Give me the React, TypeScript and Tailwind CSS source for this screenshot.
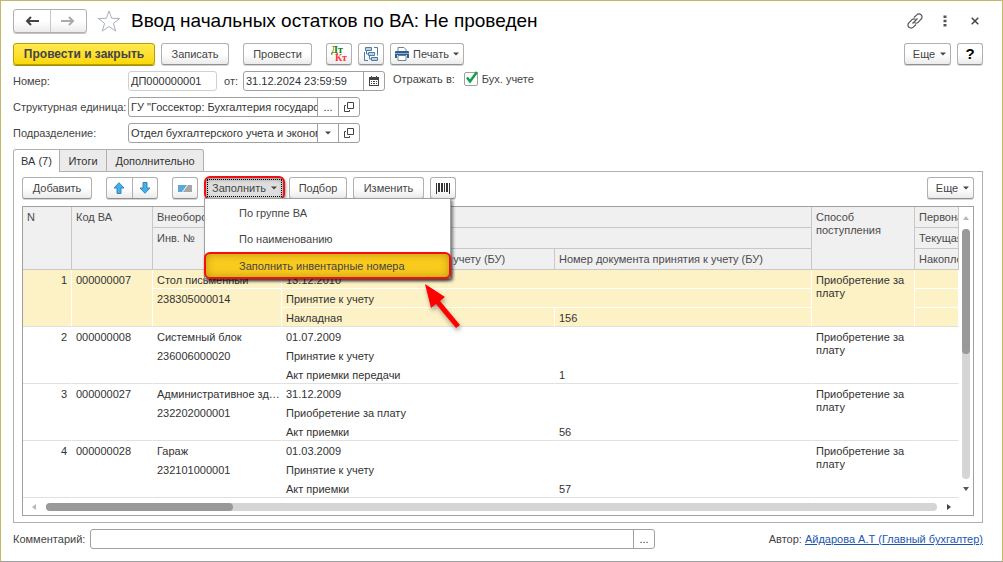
import { useState, type ReactNode } from "react";
import clsx from "clsx";

interface ButtonProps {
  label?: string;
  children?: ReactNode;
  className?: string;
}

interface AssetRow {
  n: number;
  code: string;
  name: string;
  inv: string;
  date: string;
  operation: string;
  doc: string;
  docNumber: string;
}

const rows: AssetRow[] = [
  { n: 1, code: "000000007", name: "Стол письменный", inv: "238305000014", date: "13.12.2010", operation: "Принятие к учету", doc: "Накладная", docNumber: "156" },
  { n: 2, code: "000000008", name: "Системный блок", inv: "236006000020", date: "01.07.2009", operation: "Принятие к учету", doc: "Акт приемки передачи", docNumber: "1" },
  { n: 3, code: "000000027", name: "Административное здание", inv: "232202000001", date: "31.12.2009", operation: "Приобретение за плату", doc: "Акт приемки", docNumber: "56" },
  { n: 4, code: "000000028", name: "Гараж", inv: "232101000001", date: "01.03.2009", operation: "Принятие к учету", doc: "Акт приемки", docNumber: "57" },
];

const tabs = [
  { label: "ВА (7)", width: "w-[47px]" },
  { label: "Итоги", width: "w-[47px]" },
  { label: "Дополнительно", width: "w-[97px]" },
];

const fillMenu = ["По группе ВА", "По наименованию", "Заполнить инвентарные номера"];

function Button({ label, children, className }: ButtonProps) {
  return (
    <button
      aria-label={label}
      className={clsx(
        "h-[22px] shrink-0 flex items-center justify-center rounded-[3px] border border-[#b0b0b0] border-b-[#909090] bg-linear-to-b from-white from-50% to-[#ebebeb] shadow-[0_1px_0_#d4d4d4] whitespace-nowrap text-[#444]",
        className
      )}
    >
      {children}
    </button>
  );
}

function Caret() {
  return (
    <svg width="6" height="4" viewBox="0 0 6 4" className="shrink-0">
      <path d="M0 0.5h6L3 3.5z" fill="#444" />
    </svg>
  );
}

function OpenIcon() {
  return (
    <svg width="10" height="10" viewBox="0 0 10 10" fill="none" stroke="#444">
      <path d="M3.5 0.5h6v6h-6zM2 3.5H0.5v6h5V8" />
    </svg>
  );
}

// text box with its side buttons
function Field({ id, value, label, width, children }: { id: string; value: string; label: string; width: string; children?: ReactNode }) {
  return (
    <div className={clsx("flex h-5 shrink-0 rounded-[3px] border border-[#a0a0a0] bg-white", width)}>
      <input id={id} aria-label={label} defaultValue={value} className="min-w-0 flex-1 pl-[2px] text-[#333] outline-none" />
      {children}
    </div>
  );
}

function SideButton({ label, children }: { label: string; children: ReactNode }) {
  return (
    <button aria-label={label} className="w-[21px] shrink-0 flex items-center justify-center border-l border-[#a0a0a0] text-[#333]">
      {children}
    </button>
  );
}

function TitleBar() {
  return (
    <div className="flex h-6 items-center">
      <div className="flex h-6 w-[74px] shrink-0 rounded-[3px] border border-[#b0b0b0] bg-linear-to-b from-white from-50% to-[#ebebeb] shadow-[0_1px_0_#c4c4c4]">
        <button aria-label="Назад" className="flex flex-1 items-center justify-center border-r border-[#c8c8c8]">
          <svg width="14" height="10" viewBox="0 0 14 10" fill="none" stroke="#444" strokeWidth="2">
            <path d="M14 5H2M6 1L2 5l4 4" />
          </svg>
        </button>
        <button aria-label="Вперед" className="flex flex-1 items-center justify-center">
          <svg width="14" height="10" viewBox="0 0 14 10" fill="none" stroke="#aaa" strokeWidth="2">
            <path d="M0 5h12M8 1l4 4-4 4" />
          </svg>
        </button>
      </div>
      <button aria-label="В избранное" className="ml-[10px]">
        <svg width="24" height="22" viewBox="0 0 24 22" fill="none" stroke="#a9b0b8">
          <path d="M12 1l2.7 7.3 8 .2-6.3 4.9 2.3 7.6-6.7-4.5L5.3 21l2.3-7.6L1.3 8.5l8-.2z" />
        </svg>
      </button>
      <h1 className="ml-[10px] flex-1 truncate text-[19px] leading-6 text-black">Ввод начальных остатков по ВА: Не проведен</h1>
      <div className="flex items-center text-[#444]">
        <button aria-label="Ссылка">
          <svg width="16" height="16" viewBox="0 0 16 16" fill="none" stroke="#555" strokeWidth="1.2">
            <path d="M7 4.5l2.7-2.7a3 3 0 0 1 4.4 0 3 3 0 0 1 0 4.4L11 9.3a3 3 0 0 1-3.5.5M9 11.5l-2.7 2.7a3 3 0 0 1-4.4 0 3 3 0 0 1 0-4.4L5 6.7a3 3 0 0 1 3.5-.5M5.5 10.5l5-5" />
          </svg>
        </button>
        <button aria-label="Меню" className="ml-5">
          <svg width="4" height="12" viewBox="0 0 4 12" fill="#555">
            <path d="M0.5 0.5h3v2.5h-3zM0.5 4.7h3v2.5h-3zM0.5 9h3v2.5h-3z" />
          </svg>
        </button>
        <button aria-label="Закрыть" className="mr-1 ml-6">
          <svg width="8" height="8" viewBox="0 0 8 8" stroke="#444" strokeWidth="1.5">
            <path d="M0.7 0.7l6.6 6.6M7.3 0.7L0.7 7.3" />
          </svg>
        </button>
      </div>
    </div>
  );
}

function CommandBar() {
  return (
    <div className="mt-[10px] flex gap-[6px]">
      <button className="h-[22px] w-[142px] shrink-0 rounded-[3px] border border-[#b8a000] bg-linear-to-b from-[#ffe94a] to-[#fbd800] text-[12px] font-bold text-[#444] shadow-[0_1px_0_#a89000]">
        Провести и закрыть
      </button>
      <Button className="w-[68px]">Записать</Button>
      <Button className="ml-2 w-[69px]">Провести</Button>
      <Button className="ml-2 w-[26px]" label="Движения документа">
        <svg width="20" height="18" viewBox="0 0 20 18" fontFamily="Liberation Serif" fontWeight="bold" fontSize="10">
          <text x="2" y="8" fill="#1a7a00">Дт</text>
          <text x="6" y="16" fill="#f33">Кт</text>
        </svg>
      </Button>
      <Button className="w-[26px]" label="Структура подчиненности">
        <svg width="14" height="14" viewBox="0 0 14 14" fill="none" stroke="#4f7ca3">
          <path d="M1.5 0.5h6v3h-6zM4.5 5.5h6v3h-6zM7.5 10.5h6v3h-6z" fill="#b9d1e6" />
          <path d="M10 0.5h3.5v8M0.5 5v8.5H4M2.5 4v3h2M5.500 9v3h2" />
        </svg>
      </Button>
      <Button className="w-[74px] gap-1">
        <svg width="14" height="14" viewBox="0 0 14 14">
          <path d="M3 4V0.5h6L11 2.5V4" fill="#fff" stroke="#6b8298" />
          <path d="M1 4h12q1 0 1 1v6h-2V8H2v3H0V5q0-1 1-1z" fill="#2c5f8d" />
          <path d="M0 6.5h14" stroke="#8fb2d0" />
          <path d="M3 8.5h8v5H3z" fill="#fff" stroke="#6b8298" />
        </svg>
        <span>Печать</span>
        <Caret />
      </Button>
      <div className="ml-auto flex gap-[6px]">
        <Button className="w-[47px] gap-[5px] pl-1">Еще <Caret /></Button>
        <Button className="w-[26px] text-[15px] font-bold text-black">?</Button>
      </div>
    </div>
  );
}

function DocumentFields() {
  return (
    <div className="mt-[6px] flex flex-col gap-[6px] text-[#444]">
      <div className="flex h-5 items-center">
        <label htmlFor="number" className="w-[115px] shrink-0">Номер:</label>
        <div className="flex h-5 w-[89px] shrink-0 rounded-[3px] border border-[#d0d0d0]">
          <input id="number" defaultValue="ДП000000001" className="w-full pl-[2px] text-[#333] outline-none" />
        </div>
        <label htmlFor="date" className="w-[26px] shrink-0 pl-[7px]">от:</label>
        <Field id="date" label="Дата" value="31.12.2024 23:59:59" width="w-[142px]">
          <SideButton label="Календарь">
            <svg width="10" height="10" viewBox="0 0 10 10" fill="#444">
              <path d="M0 1h10v9H0zM1 4v5h8V4z" fillRule="evenodd" />
              <path d="M2 0h1v2H2zM7 0h1v2H7zM2 5h1v1H2zM4 5h2v1H4zM7 5h1v1H7zM2 7h1v1H2zM4 7h2v1H4zM7 7h1v1H7z" />
            </svg>
          </SideButton>
        </Field>
        <div className="mb-1 ml-2 flex items-center whitespace-nowrap">
          <span>Отражать в:</span>
          <label className="ml-[9px] flex items-center gap-1">
            <span className="relative flex size-[14px]">
              <input type="checkbox" defaultChecked className="peer size-[14px] appearance-none rounded-[2px] border border-[#a0a0a0] bg-white" />
              <svg className="pointer-events-none absolute inset-0 hidden overflow-visible peer-checked:block" width="14" height="14" viewBox="0 0 14 14" fill="none" stroke="#0ea04b" strokeWidth="2.5">
                <path d="M3 5.5L6 9.5L13 0" />
              </svg>
            </span>
            <span>Бух. учете</span>
          </label>
        </div>
      </div>
      <div className="flex h-5 items-center">
        <label htmlFor="unit" className="w-[115px] shrink-0 whitespace-nowrap">Структурная единица:</label>
        <Field id="unit" label="Структурная единица" value={'ГУ "Госсектор: Бухгалтерия государственного учреждения"'} width="w-[232px]">
          <SideButton label="Выбрать">...</SideButton>
          <SideButton label="Открыть"><OpenIcon /></SideButton>
        </Field>
      </div>
      <div className="flex h-5 items-center">
        <label htmlFor="department" className="w-[115px] shrink-0">Подразделение:</label>
        <Field id="department" label="Подразделение" value="Отдел бухгалтерского учета и экономики" width="w-[232px]">
          <SideButton label="Список"><Caret /></SideButton>
          <SideButton label="Открыть"><OpenIcon /></SideButton>
        </Field>
      </div>
    </div>
  );
}

function FillMenu() {
  return (
    <div className="absolute top-[21px] left-0 z-10 w-[247px] border border-[#a0a0a0] bg-white pt-px shadow-[2px_2px_3px_rgba(0,0,0,0.5)]">
      {fillMenu.map((item, index) => (
        <button
          key={item}
          className={clsx(
            "block h-[26px] text-left text-[#444]",
            index === 2
              ? "-mx-px -mb-px h-[27px] w-[247px] rounded-md border-2 border-[#f00f14] bg-[#f9cb1e] pl-[33px] shadow-[inset_0_0_8px_rgba(150,110,0,0.6),1px_2px_3px_rgba(0,0,0,0.5)]"
              : "w-full pl-[34px]"
          )}
        >
          {item}
        </button>
      ))}
      <svg className="pointer-events-none absolute top-[83px] left-[217px] drop-shadow-[1px_3px_2px_rgba(0,0,0,0.35)]" width="42" height="48" viewBox="0 0 42 48">
        <path d="M3 2l20 13-5 4 20 24-4 3-20-24-5 4z" fill="#f00" />
      </svg>
    </div>
  );
}

function TableBar() {
  return (
    <div className="flex gap-[6px]">
      <Button className="w-[70px]">Добавить</Button>
      <div className="ml-2 flex h-[22px] w-[52px] shrink-0 rounded-[3px] border border-[#b0b0b0] border-b-[#909090] bg-linear-to-b from-white from-50% to-[#ebebeb] shadow-[0_1px_0_#d4d4d4]">
        <button aria-label="Вверх" className="flex flex-1 items-center justify-center border-r border-[#b0b0b0]">
          <svg width="12" height="12" viewBox="0 0 12 12" fill="#41b0f0" stroke="#3a86b4">
            <path d="M6 0.7L11 6H8v5.5H4V6H1z" />
          </svg>
        </button>
        <button aria-label="Вниз" className="flex flex-1 items-center justify-center">
          <svg width="12" height="12" viewBox="0 0 12 12" fill="#41b0f0" stroke="#3a86b4">
            <path d="M6 11.3L11 6H8V0.5H4V6H1z" />
          </svg>
        </button>
      </div>
      <Button className="ml-2 w-[26px]" label="Выделить">
        <svg width="14" height="7" viewBox="0 0 14 7">
          <path d="M0 0h9L4 7H0z" fill="#5aa9dc" />
          <path d="M10 0h4v7H5z" fill="#a6a6a6" />
        </svg>
      </Button>
      <div className="relative w-[79px] shrink-0">
        <button className="-mt-px flex h-6 w-[81px] items-center rounded-md border-2 border-[#f00f14] bg-[#dedede] p-px text-[#444] shadow-[inset_0_1px_4px_rgba(0,0,0,0.4),1px_2px_3px_rgba(0,0,0,0.4)]">
          <span className="flex h-[18px] w-full items-center justify-center gap-[5px] border border-dotted border-black">Заполнить <Caret /></span>
        </button>
        <FillMenu />
      </div>
      <Button className="w-[58px]">Подбор</Button>
      <Button className="w-[71px]">Изменить</Button>
      <Button className="w-[26px]" label="Штрихкод">
        <svg width="14" height="11" viewBox="0 0 14 11" fill="#333">
          <path d="M0 0h1v11H0zM2 0h2v9H2zM5 0h2v9H5zM8 0h1v9H8zM10 0h2v9h-2zM13 0h1v11h-1z" />
        </svg>
      </Button>
      <Button className="ml-auto w-[47px] gap-[5px] pl-1">Еще <Caret /></Button>
    </div>
  );
}

const th = "border-r border-b border-[#c8c8c8] bg-[#f0f0f0] pt-1 pb-[3px] pl-1 text-left align-top font-normal text-[#4a4a4a] overflow-hidden whitespace-nowrap";
const td = "pt-1 pb-px pl-1 align-top overflow-hidden text-ellipsis whitespace-nowrap";

function AssetsTable() {
  return (
    <table className="w-full table-fixed border-separate border-spacing-0 leading-[13px]">
      <colgroup>
        <col className="w-[49px]" />
        <col className="w-[81px]" />
        <col className="w-[129px]" />
        <col className="w-[273px]" />
        <col />
        <col className="w-[103px]" />
        <col className="w-11" />
      </colgroup>
      <thead>
        <tr className="h-[21px]">
          <th rowSpan={3} className={th}>N</th>
          <th rowSpan={3} className={th}>Код ВА</th>
          <th className={th}>Внеоборотный</th>
          <th colSpan={2} className={th}></th>
          <th rowSpan={3} className={th}>Способ<br />поступления</th>
          <th className={th}>Первоначальная</th>
        </tr>
        <tr className="h-[21px]">
          <th rowSpan={2} className={th}>Инв. №</th>
          <th colSpan={2} className={th}></th>
          <th className={th}>Текущая</th>
        </tr>
        <tr className="h-[21px]">
          <th className={th}>Название документа принятия к учету (БУ)</th>
          <th className={th}>Номер документа принятия к учету (БУ)</th>
          <th className={th}>Накопленная</th>
        </tr>
      </thead>
      {rows.map((row, index) => {
        const selected = index === 0;
        const cell = clsx(td, selected ? "border-r border-b border-white bg-[#fdf1c6]" : "border-r border-b border-transparent");
        const last = clsx(td, selected ? "border-r border-r-white bg-[#fdf1c6]" : "border-r border-r-transparent", "border-b border-b-[#e0e0e0]");
        return (
          <tbody key={row.code} className="text-[#333]">
            <tr className="h-[19px]">
              <td rowSpan={3} className={clsx(last, "pr-1 text-right")}>{row.n}</td>
              <td rowSpan={3} className={last}>{row.code}</td>
              <td className={cell}>{row.name}</td>
              <td colSpan={2} className={cell}>{row.date}</td>
              <td rowSpan={3} className={last}>Приобретение за<br />плату</td>
              <td className={cell}></td>
            </tr>
            <tr className="h-[19px]">
              <td rowSpan={2} className={last}>{row.inv}</td>
              <td colSpan={2} className={cell}>{row.operation}</td>
              <td className={cell}></td>
            </tr>
            <tr className="h-[19px]">
              <td className={last}>{row.doc}</td>
              <td className={last}>{row.docNumber}</td>
              <td className={last}></td>
            </tr>
          </tbody>
        );
      })}
    </table>
  );
}

export default function App() {
  const [activeTab, setActiveTab] = useState(tabs[0].label);

  return (
    <main className="border border-[#c5b668] border-b-[#a0a0a0] bg-white pt-2 pr-[19px] pb-3 pl-3 font-['Liberation_Sans',Arial,sans-serif] text-[11px] leading-[14px]">
      <TitleBar />
      <CommandBar />
      <DocumentFields />

      <div className="mt-[6px] flex h-[22px]">
        {tabs.map((tab, index) => (
          <button
            key={tab.label}
            onClick={() => setActiveTab(tab.label)}
            className={clsx(
              "border-t border-r border-[#b0b0b0] text-[#333] whitespace-nowrap",
              tab.width,
              index === 0 && "rounded-tl-[3px] border-l",
              index === 2 && "rounded-tr-[3px]",
              activeTab === tab.label ? "z-1 -mb-px bg-white" : "bg-[#ebebeb]"
            )}
          >
            {tab.label}
          </button>
        ))}
      </div>

      <section className="border border-[#b0b0b0] px-2 pt-[5px] pb-[6px]">
        <TableBar />
        <div className="mt-[6px] border border-[#a0a0a0]">
          <div className="flex">
            <div className="min-w-0 flex-1">
              <AssetsTable />
            </div>
            <div className="flex w-[14px] shrink-0 flex-col items-center py-[6px]">
              <svg width="6" height="12" viewBox="0 0 6 12" fill="#b8b8b8"><path d="M0 7h6L3 3z" /></svg>
              <div className="mt-1 mb-[7px] w-2 flex-1 rounded-full bg-[#d5d5d5]">
                <div className="h-1/2 rounded-full bg-[#999]"></div>
              </div>
              <svg width="6" height="6" viewBox="0 0 6 6" fill="#555"><path d="M0 1h6L3 5z" /></svg>
            </div>
          </div>
          <div className="flex h-[17px] items-center pl-[9px] pr-[22px]">
            <svg width="4" height="6" viewBox="0 0 4 6" fill="#b8b8b8"><path d="M4 0v6L0 3z" /></svg>
            <div className="mr-[10px] ml-[10px] h-2 flex-1 rounded-full bg-[#d5d5d5]">
              <div className="h-2 w-[21%] rounded-full bg-[#999]"></div>
            </div>
            <svg width="4" height="6" viewBox="0 0 4 6" fill="#444"><path d="M0 0v6l4-3z" /></svg>
          </div>
        </div>
      </section>

      <footer className="mt-[6px] flex h-5 items-center text-[#444]">
        <label htmlFor="comment" className="w-[77px] shrink-0">Комментарий:</label>
        <Field id="comment" label="Комментарий" value="" width="w-[565px]">
          <SideButton label="Выбрать">...</SideButton>
        </Field>
        <p className="ml-auto whitespace-nowrap">
          Автор: <a href="#" className="text-[#1a56b0] underline">Айдарова А.Т (Главный бухгалтер)</a>
        </p>
      </footer>
    </main>
  );
}
